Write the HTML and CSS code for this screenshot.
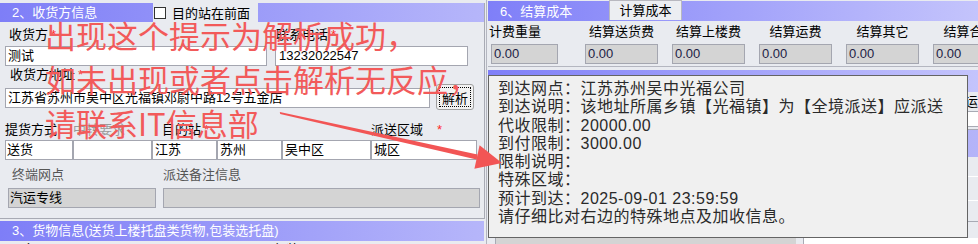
FILE: index.html
```html
<!DOCTYPE html>
<html lang="zh-CN">
<head>
    <meta charset="UTF-8">
    <meta name="viewport" content="width=device-width, initial-scale=1.0">
    <title>收货方信息</title>
    <link rel="stylesheet" href="styles.css">
</head>
<body>
    <div class="screen">
        <div class="left">
            <div class="group">
                <div class="bar">
                    <span class="bar-title">2、收货方信息</span>
                    <label class="check"><span class="box"></span>目的站在前面</label>
                </div>

                <div class="labels row1">
                    <span class="c-name">收货方<i>*</i></span>
                    <span>联系电话<i>*</i></span>
                </div>
                <div class="fields row1-fields">
                    <div class="field w-name">测试</div>
                    <div class="field w-phone">13232022547</div>
                </div>

                <div class="labels row2">
                    <span>收货方地址<i>*</i></span>
                </div>
                <div class="addr">
                    <div class="field w-addr">江苏省苏州市吴中区光福镇邓尉中路12号五金店</div>
                    <button type="button" class="btn">解析</button>
                </div>

                <div class="labels row3">
                    <span class="c-pick">提货方式</span>
                    <span class="c-trans muted">中转要求</span>
                    <span class="c-dest">目的站<i>*</i></span>
                    <span class="c-area">派送区域</span>
                    <i>*</i>
                </div>
                <div class="cells">
                    <div class="cell w1">送货</div>
                    <div class="cell w2"></div>
                    <div class="cell w3">江苏</div>
                    <div class="cell w3">苏州</div>
                    <div class="cell w4">吴中区</div>
                    <div class="cell w5">城区</div>
                </div>

                <div class="labels row4">
                    <span class="c-term">终端网点</span>
                    <span>派送备注信息</span>
                </div>
                <div class="fields row4-fields">
                    <div class="field ro w-term">汽运专线</div>
                    <div class="field ro w-note"></div>
                </div>
            </div>

            <div class="bar bar3">
                <span class="bar-title">3、货物信息(送货上楼托盘类货物,包装选托盘)</span>
            </div>
            <div class="labels row5">
                <span class="c-goods">品名</span>
                <span>包装</span>
            </div>
        </div>

        <div class="split"></div>

        <div class="right">
            <div class="bar rbar">
                <span class="bar-title rtitle">6、结算成本</span>
                <span class="tab">计算成本</span>
            </div>

            <div class="costs">
                <div class="cost">
                    <div class="cost-label">计费重量</div>
                    <div class="field ro num">0.00</div>
                </div>
                <div class="cost">
                    <div class="cost-label">结算送货费</div>
                    <div class="field ro num">0.00</div>
                </div>
                <div class="cost">
                    <div class="cost-label">结算上楼费</div>
                    <div class="field ro num">0.00</div>
                </div>
                <div class="cost">
                    <div class="cost-label">结算运费</div>
                    <div class="field ro num">0.00</div>
                </div>
                <div class="cost">
                    <div class="cost-label">结算其它</div>
                    <div class="field ro num">0.00</div>
                </div>
                <div class="cost">
                    <div class="cost-label">结算合计</div>
                    <div class="field ro num">0.00</div>
                </div>
            </div>

            <div class="bar rbar sub-bar"></div>
            <div class="band-label"><span>运费</span></div>
            <div class="band-white"></div>
            <div class="band-double"></div>
            <div class="band-head"></div>
            <div class="grid-row"></div>
            <div class="grid-row tall"></div>
            <div class="grid-row last"></div>
            <div class="grid-row end"></div>
            <div class="bottom">
                <div class="bottom-gap"></div>
                <div class="bottom-field"></div>
                <div class="bottom-gap"></div>
                <div class="bottom-white"></div>
            </div>
        </div>

        <div class="tip">
            <div>到达网点：江苏苏州吴中光福公司</div>
            <div>到达说明：该地址所属乡镇【光福镇】为【全境派送】应派送</div>
            <div>代收限制：20000.00</div>
            <div>到付限制：3000.00</div>
            <div>限制说明：</div>
            <div>特殊区域：</div>
            <div>预计到达：2025-09-01 23:59:59</div>
            <div>请仔细比对右边的特殊地点及加收信息。</div>
        </div>

        <div class="note">
            <div>出现这个提示为解析成功，</div>
            <div>如未出现或者点击解析无反应，</div>
            <div>请联系IT信息部</div>
        </div>

        <svg class="arrow" width="978" height="244" viewBox="0 0 978 244">
            <polygon points="279.8,112 280.2,114 476.5,159.4 477.5,154.6" fill="#f25555"/>
            <polygon points="502,163 479.6,145.3 474.4,168.7" fill="#f25555"/>
        </svg>
    </div>
</body>
</html>
```

FILE: styles.css
```css
* {
    box-sizing: border-box;
}

body {
    margin: 0;
    background-color: #e9ebf0;
    font-family: "Liberation Sans", "Noto Sans CJK SC", sans-serif;
    font-size: 13px;
    color: #000;
    overflow: hidden;
}

.screen {
    position: relative;
    display: flex;
    width: 978px;
    height: 244px;
    overflow: hidden;
}

/* left side: consignee */
.left {
    width: 485px;
    flex: none;
}

.group {
    height: 216px;
    border-right: 1px solid #a8aab4;
    border-bottom: 1px solid #a8aab4;
}

.bar {
    display: flex;
    align-items: center;
    width: 484px;
    height: 19px;
    margin-top: 3px;
    background: linear-gradient(to right, #7e7ef7, #b6b6fa);
    color: #fff;
    white-space: nowrap;
}

.bar-title {
    width: 153px;
    padding-left: 12px;
    line-height: 19px;
}

.check {
    display: flex;
    align-items: center;
    align-self: stretch;
    width: 105px;
    padding-left: 1px;
    background-color: #e9ebf0;
    color: #000;
}

.box {
    width: 12px;
    height: 12px;
    margin-right: 6px;
    background-color: #fff;
    border: 1px solid #333;
}

.labels {
    display: flex;
    line-height: 16px;
    white-space: nowrap;
}

.labels i {
    font-style: normal;
    color: #ff2a2a;
    margin-left: 3px;
}

.row1 {
    height: 24px;
    padding: 5px 0 0 9px;
}

.c-name {
    width: 267px;
}

.row2 {
    height: 18px;
    padding: 1px 0 0 10px;
}

.row3 {
    height: 30px;
    padding: 12px 0 0 5px;
}

.c-pick { width: 68px; }
.c-trans { width: 89px; }
.c-dest { width: 209px; }
.c-area { width: 63px; }

.muted {
    color: #9a9a9a;
}

.row4 {
    height: 28px;
    padding: 7px 0 0 12px;
    color: #555;
}

.c-term {
    width: 151px;
}

.row5 {
    padding: 1px 0 0 10px;
}

.c-goods {
    width: 263px;
}

.fields {
    display: flex;
    gap: 8px;
    padding-left: 5px;
}

.field {
    height: 20px;
    padding-left: 2px;
    line-height: 18px;
    background-color: #fff;
    border: 1px solid #a4a6b0;
    white-space: nowrap;
    overflow: hidden;
}

.w-name { width: 262px; }
.w-phone { width: 193px; padding-left: 3px; }

.addr {
    display: flex;
    align-items: flex-start;
    height: 26px;
    padding-left: 5px;
}

.w-addr {
    width: 425px;
    margin-top: 4px;
}

.btn {
    position: relative;
    width: 38px;
    height: 26px;
    margin-left: 6px;
    padding: 0;
    font: inherit;
    background-color: #f2f2f2;
    border: 1px solid #a0a0a0;
    border-radius: 3px;
}

.btn::after {
    content: "";
    position: absolute;
    inset: 2px;
    border: 1px dotted #000;
}

.cells {
    display: flex;
    height: 20px;
    padding-left: 5px;
}

.cell {
    height: 20px;
    padding-left: 2px;
    line-height: 18px;
    background-color: #fff;
    border: 1px solid #a4a6b0;
}

.w1 { width: 68px; padding-left: 1px; }
.w2 { width: 79px; }
.w3 { width: 65px; }
.w4 { width: 89px; }
.w5 { width: 106px; }

.row4-fields {
    gap: 7px;
    padding-left: 8px;
}

.ro {
    background-color: #d4d4d4;
}

.w-term { width: 148px; padding-left: 1px; }
.w-note { width: 317px; }

.bar3 {
    height: 20px;
    margin-top: 2px;
}

.bar3 .bar-title {
    width: auto;
    line-height: 20px;
}

/* splitter */
.split {
    display: flex;
    justify-content: center;
    width: 3px;
    flex: none;
}

.split::before {
    content: "";
    width: 1px;
    background-color: #b4b6c0;
}

/* right side: settlement */
.right {
    flex: 1;
    min-width: 0;
}

.rbar {
    width: auto;
    height: 20px;
    margin-top: 1px;
    background: linear-gradient(to right, #7f7ff8, #c4c4fc);
}

.rtitle {
    width: 121px;
}

.tab {
    align-self: flex-start;
    width: 73px;
    height: 20px;
    margin-top: -1px;
    line-height: 19px;
    text-align: center;
    color: #000;
    background-color: #eceef2;
    border: 1px solid #b8b8c0;
    border-bottom: none;
}

.costs {
    display: flex;
    height: 46px;
    padding-left: 3px;
    border-bottom: 1px solid #b4b6c0;
}

.cost {
    flex: none;
    width: 73px;
    margin-right: 14px;
}

.cost:first-child {
    width: 67px;
    margin-right: 27px;
}

.cost-label {
    height: 23px;
    padding-top: 3px;
    line-height: 16px;
    text-align: center;
    white-space: nowrap;
    display: flex;
    justify-content: center;
}

.cost:first-child .cost-label {
    justify-content: flex-start;
    margin-left: -2px;
}

.num {
    color: #1c1c44;
}

.sub-bar {
    height: 22px;
    margin-top: 3px;
}

.band-label {
    height: 20px;
    padding-left: 477px;
    line-height: 19px;
    white-space: nowrap;
    border-bottom: 1px solid #a8aab4;
}

.band-white {
    height: 14px;
    background-color: #fff;
}

.band-double {
    height: 4px;
    border-top: 1px solid #a8aab4;
    border-bottom: 1px solid #a8aab4;
}

.band-head {
    height: 27px;
    background: linear-gradient(to right, #8c8cf8, #b4b4f9);
}

.grid-row {
    height: 20px;
    border-bottom: 1px solid #fff;
}

.grid-row.tall { height: 24px; }
.grid-row.last { height: 21px; border-bottom-color: #a8aab4; }
.grid-row.end { height: 16px; border-bottom: none; }

.bottom {
    display: flex;
    height: 10px;
}

.bottom-gap {
    width: 8px;
    border-right: 1px solid #a8aab4;
}

.bottom-field {
    width: 300px;
    background-color: #d4d4d4;
}

.bottom-white {
    flex: 1;
    background-color: #fff;
}

/* hover tip */
.tip {
    position: absolute;
    left: 488px;
    top: 75px;
    width: 480px;
    height: 163px;
    padding: 4px 0 0 9px;
    font-size: 16px;
    line-height: 18.3px;
    letter-spacing: 0.5px;
    color: #2a2a2a;
    white-space: nowrap;
    background-color: #f0f0f0;
    border: 1px solid #646464;
}

/* annotation */
.note {
    position: absolute;
    left: 45px;
    top: 13px;
    font-family: "Noto Sans CJK SC", sans-serif;
    font-size: 31px;
    line-height: 44px;
    color: #f25a5a;
    white-space: nowrap;
}

.arrow {
    position: absolute;
    left: 0;
    top: 0;
    pointer-events: none;
}
```
